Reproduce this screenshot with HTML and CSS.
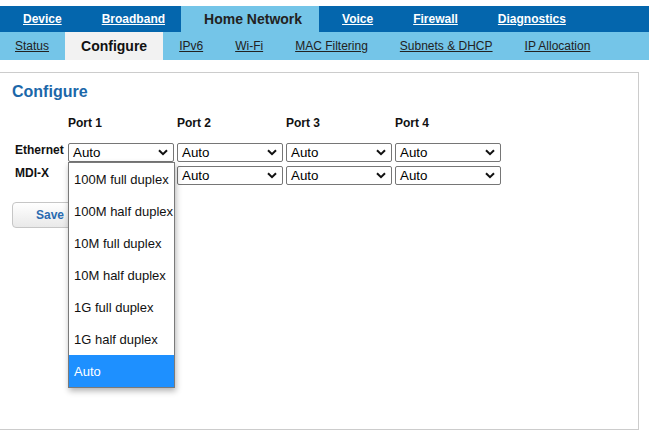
FILE: index.html
```html
<!DOCTYPE html>
<html>
<head>
<meta charset="utf-8">
<link rel="stylesheet" href="styles.css">
</head>
<body>
<div class="top-gap"></div>
<nav class="nav">
  <a class="nav-item first" href="#">Device</a>
  <a class="nav-item" href="#">Broadband</a>
  <span class="nav-tab">Home Network</span>
  <a class="nav-item" href="#">Voice</a>
  <a class="nav-item" href="#">Firewall</a>
  <a class="nav-item" href="#">Diagnostics</a>
</nav>
<nav class="subnav">
  <a class="sub-item first" href="#">Status</a>
  <span class="sub-tab">Configure</span>
  <a class="sub-item" href="#">IPv6</a>
  <a class="sub-item" href="#">Wi-Fi</a>
  <a class="sub-item" href="#">MAC Filtering</a>
  <a class="sub-item" href="#">Subnets &amp; DHCP</a>
  <a class="sub-item" href="#">IP Allocation</a>
</nav>
<main class="panel">
  <h2 class="title">Configure</h2>
  <div class="grid">
    <div class="corner"></div>
    <div class="port">Port 1</div>
    <div class="port">Port 2</div>
    <div class="port">Port 3</div>
    <div class="port">Port 4</div>

    <div class="label">Ethernet</div>
    <div class="cell">
      <div class="select"><span>Auto</span><svg class="chev" width="10" height="7" viewBox="0 0 10 7"><path d="M1 1.2 L5 5.2 L9 1.2" fill="none" stroke="#111" stroke-width="2"/></svg></div>
      <ul class="dropdown">
        <li>100M full duplex</li>
        <li>100M half duplex</li>
        <li>10M full duplex</li>
        <li>10M half duplex</li>
        <li>1G full duplex</li>
        <li>1G half duplex</li>
        <li class="selected">Auto</li>
      </ul>
    </div>
    <div class="cell"><div class="select"><span>Auto</span><svg class="chev" width="10" height="7" viewBox="0 0 10 7"><path d="M1 1.2 L5 5.2 L9 1.2" fill="none" stroke="#111" stroke-width="2"/></svg></div></div>
    <div class="cell"><div class="select"><span>Auto</span><svg class="chev" width="10" height="7" viewBox="0 0 10 7"><path d="M1 1.2 L5 5.2 L9 1.2" fill="none" stroke="#111" stroke-width="2"/></svg></div></div>
    <div class="cell"><div class="select"><span>Auto</span><svg class="chev" width="10" height="7" viewBox="0 0 10 7"><path d="M1 1.2 L5 5.2 L9 1.2" fill="none" stroke="#111" stroke-width="2"/></svg></div></div>

    <div class="label">MDI-X</div>
    <div class="cell"><div class="select"><span>Auto</span><svg class="chev" width="10" height="7" viewBox="0 0 10 7"><path d="M1 1.2 L5 5.2 L9 1.2" fill="none" stroke="#111" stroke-width="2"/></svg></div></div>
    <div class="cell"><div class="select"><span>Auto</span><svg class="chev" width="10" height="7" viewBox="0 0 10 7"><path d="M1 1.2 L5 5.2 L9 1.2" fill="none" stroke="#111" stroke-width="2"/></svg></div></div>
    <div class="cell"><div class="select"><span>Auto</span><svg class="chev" width="10" height="7" viewBox="0 0 10 7"><path d="M1 1.2 L5 5.2 L9 1.2" fill="none" stroke="#111" stroke-width="2"/></svg></div></div>
    <div class="cell"><div class="select"><span>Auto</span><svg class="chev" width="10" height="7" viewBox="0 0 10 7"><path d="M1 1.2 L5 5.2 L9 1.2" fill="none" stroke="#111" stroke-width="2"/></svg></div></div>
  </div>
  <button class="save">Save</button>
</main>
</body>
</html>
```
FILE: styles.css
```css
* { box-sizing: border-box; }
body {
  margin: 0;
  font-family: "Liberation Sans", Arial, sans-serif;
  background: #fff;
  color: #111;
  width: 649px;
}
.top-gap { height: 6px; }
.nav {
  height: 26px;
  background: #0466ad;
  display: flex;
  align-items: stretch;
}
.nav-item {
  display: flex;
  align-items: center;
  padding: 0 20px;
  color: #fff;
  font-weight: bold;
  font-size: 12px;
  text-decoration: underline;
}
.nav-item.first { margin-left: 3px; }
.nav-tab {
  display: flex;
  align-items: center;
  justify-content: center;
  width: 138px;
  margin-left: -4px;
  margin-right: 3px;
  padding-left: 6px;
  background: #74c5e8;
  color: #222;
  font-weight: bold;
  font-size: 14px;
}
.subnav {
  height: 28px;
  background: #74c5e8;
  display: flex;
  align-items: stretch;
}
.sub-item {
  display: flex;
  align-items: center;
  padding: 0 16px;
  color: #222;
  font-size: 12px;
  text-decoration: underline;
}
.sub-item.first { margin-left: -1px; }
.sub-tab {
  display: flex;
  align-items: center;
  padding: 0 16px;
  background: #f2f2f2;
  color: #111;
  font-weight: bold;
  font-size: 14px;
}
.panel {
  margin-top: 12px;
  width: 639px;
  height: 358px;
  border: 1px solid #cccccc;
  border-left: none;
  padding: 10px 12px;
}
.title {
  margin: 0;
  font-size: 16px;
  line-height: 18px;
  color: #1b67a9;
  font-weight: bold;
}
.grid {
  margin-top: 15px;
  display: grid;
  grid-template-columns: 53px repeat(4, 106px);
  column-gap: 3px;
  row-gap: 4px;
  font-size: 12px;
}
.port {
  line-height: 14px;
  margin-bottom: 9px;
  color: #111;
  font-weight: bold;
}
.label {
  margin-left: 3px;
  line-height: 14px;
  font-weight: bold;
  color: #111;
  white-space: nowrap;
}
.cell { position: relative; }
.select {
  height: 19px;
  width: 106px;
  border: 1px solid #767676;
  border-radius: 2px;
  background: #fff;
  display: flex;
  align-items: center;
  justify-content: space-between;
  padding: 0 5px 0 4px;
  font-size: 13.33px;
  color: #000;
}
.chev { display: block; }
.dropdown {
  position: absolute;
  left: 0;
  top: 19px;
  width: 107px;
  margin: 0;
  padding: 0;
  list-style: none;
  background: #fff;
  border: 1px solid #7a7a7a;
  box-shadow: 1px 3px 6px rgba(0, 0, 0, 0.3);
  z-index: 10;
}
.dropdown li {
  height: 32px;
  line-height: 33px;
  padding-left: 5px;
  font-size: 13px;
  color: #111;
  white-space: nowrap;
}
.dropdown li.selected {
  background: #1e90ff;
  color: #fff;
}
.save {
  display: block;
  margin-top: 17px;
  width: 76px;
  height: 26px;
  border: 1px solid #c6c6c6;
  border-radius: 4px;
  background: linear-gradient(#ffffff, #e9e9e9);
  color: #2a6bb0;
  font-family: "Liberation Sans", Arial, sans-serif;
  font-weight: bold;
  font-size: 12px;
  padding: 0;
}
```
